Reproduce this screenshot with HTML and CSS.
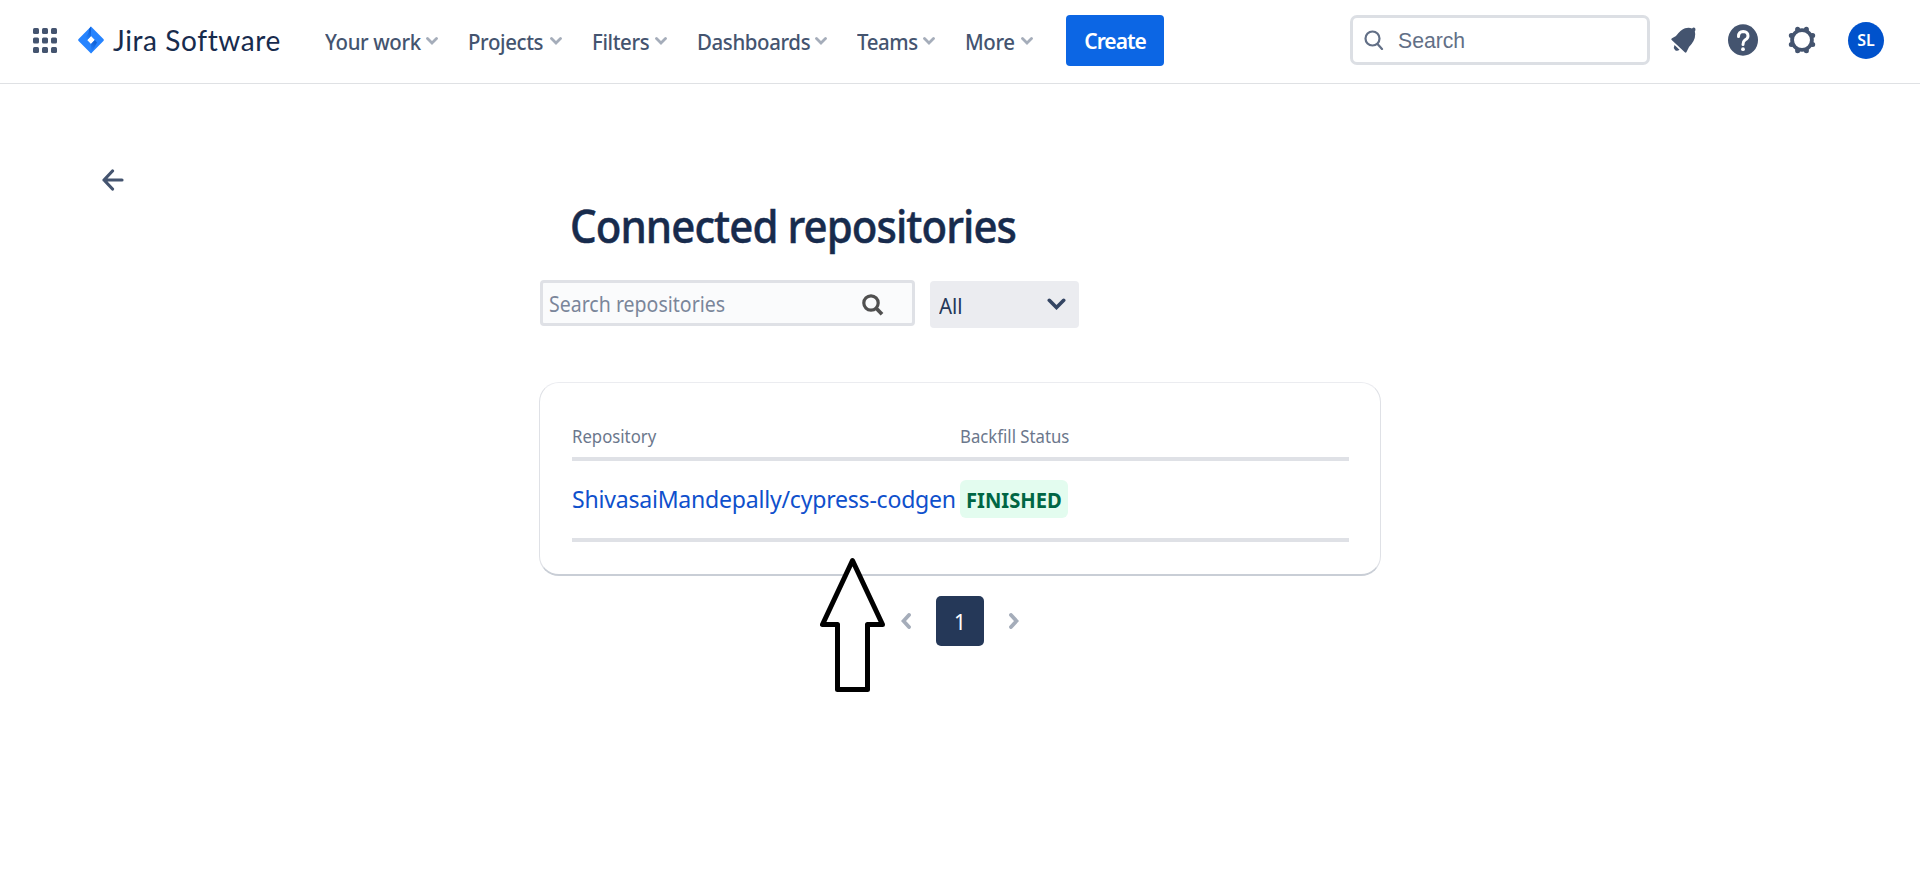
FILE: index.html
```html
<!DOCTYPE html>
<html lang="en">
<head>
<meta charset="utf-8">
<title>Connected repositories</title>
<link rel="stylesheet" href="styles.css">
</head>
<body>
<header class="topbar">
  <svg class="switcher" viewBox="0 0 24 25" fill="#44546f"><rect width="6" height="6" rx="1.5"/><rect x="9" width="6" height="6" rx="1.5"/><rect x="18" width="6" height="6" rx="1.5"/><rect y="9.5" width="6" height="6" rx="1.5"/><rect x="9" y="9.5" width="6" height="6" rx="1.5"/><rect x="18" y="9.5" width="6" height="6" rx="1.5"/><rect y="19" width="6" height="6" rx="1.5"/><rect x="9" y="19" width="6" height="6" rx="1.5"/><rect x="18" y="19" width="6" height="6" rx="1.5"/></svg>
  <svg class="logo" viewBox="0 0 26 28"><defs><linearGradient id="g1" x1="0.6" y1="0" x2="0.2" y2="0.9"><stop offset="0.2" stop-color="#1062d8"/><stop offset="1" stop-color="#2684ff"/></linearGradient></defs><path fill="#2684ff" fill-rule="evenodd" d="M13 .5 25.400 13q.9 1 0 2L13 27.500 .6 15q-.9-1 0-2ZM13 10 9.200 14 13 18 16.800 14Z"/><path fill="url(#g1)" d="M13 .5V10L9.200 14 7 11.500Q11.500 7 11 3Z"/><path fill="url(#g1)" d="M16.800 14 19 16.500 13 27.500V18Z"/></svg>
  <span class="brand">Jira Software</span>
  <nav class="nav">
    <a class="item w1"><span>Your work</span><svg class="chev" viewBox="0 0 12 8"><path d="M1.500 1.500 6 6 10.500 1.500"/></svg></a>
    <a class="item w2"><span>Projects</span><svg class="chev" viewBox="0 0 12 8"><path d="M1.500 1.500 6 6 10.500 1.500"/></svg></a>
    <a class="item w3"><span>Filters</span><svg class="chev" viewBox="0 0 12 8"><path d="M1.500 1.500 6 6 10.500 1.500"/></svg></a>
    <a class="item w4"><span>Dashboards</span><svg class="chev" viewBox="0 0 12 8"><path d="M1.500 1.500 6 6 10.500 1.500"/></svg></a>
    <a class="item w5"><span>Teams</span><svg class="chev" viewBox="0 0 12 8"><path d="M1.500 1.500 6 6 10.500 1.500"/></svg></a>
    <a class="item w6"><span>More</span><svg class="chev" viewBox="0 0 12 8"><path d="M1.500 1.500 6 6 10.500 1.500"/></svg></a>
  </nav>
  <button class="create">Create</button>
  <div class="search"><svg viewBox="0 0 20 20" fill="none" stroke="#626f86" stroke-width="2.200" stroke-linecap="round"><circle cx="8.500" cy="8.500" r="7"/><path d="m13.500 14 4.500 5"/></svg><span>Search</span></div>
  <svg class="bell" viewBox="0 0 25 26" fill="#44546f"><path d="M.7 13Q-.2 12 1 11.300L5 9Q10 2.500 14 1.300 18 .2 21 1.500 22.700-.2 24 1 25 2.500 23.800 4.500 25 9 22.500 14 20.500 17.500 18 20L15.500 25Q14.800 26.200 13.800 25.300Z"/><path d="M3.500 18 8.500 22.800Q6 24.800 4 23 2 20.500 3.500 18Z"/></svg>
  <svg class="help" viewBox="0 0 30 32"><ellipse cx="15" cy="16" rx="15" ry="15.700" fill="#44546f"/><path d="M10.500 12.500Q10.500 7.500 15.200 7.500 20 7.700 20 12 20 14.500 17 16 15 17.500 15 20.500" fill="none" stroke="#fff" stroke-width="3" stroke-linecap="round"/><circle cx="15" cy="25.200" r="1.900" fill="#fff"/></svg>
  <svg class="gear" viewBox="0 0 28 28"><circle cx="14" cy="14" r="9.900" fill="none" stroke="#44546f" stroke-width="3.800"/><path d="M9.600 3.300V3.400M18.400 3.300V3.400M9.600 24.700V24.600M18.400 24.700V24.600M3.300 9.600H3.400M3.300 18.400H3.400M24.700 9.600H24.600M24.700 18.400H24.600" stroke="#44546f" stroke-width="5" stroke-linecap="round"/></svg>
  <div class="avatar">SL</div>
</header>
<main class="page">
  <svg class="back" viewBox="0 0 22 22" fill="none" stroke="#44546f" stroke-width="3.200" stroke-linecap="round" stroke-linejoin="round"><path d="M20 11H2M10.500 2 2 11l8.500 9"/></svg>
  <section class="content">
    <h1 class="title"><span>Connected repositories</span></h1>
    <div class="filters">
      <div class="repo-search"><span>Search repositories</span><svg viewBox="0 0 22 22" fill="none" stroke="#505050"><circle cx="9" cy="9" r="7.200" stroke-width="3.200"/><path d="m14.500 14.500 5.500 5.800" stroke-width="3.800"/></svg></div>
      <div class="select"><span>All</span><svg viewBox="0 0 19 12" fill="none" stroke="#344563" stroke-width="3.600" stroke-linecap="round"><path d="M2.300 2.300 9.500 9.500l7.200-7.200"/></svg></div>
    </div>
    <div class="card">
      <div class="row head"><span>Repository</span><span>Backfill Status</span></div>
      <div class="row data"><a class="link">ShivasaiMandepally/cypress-codgen</a><span class="badge"><span>FINISHED</span></span></div>
    </div>
    <div class="pager">
      <svg viewBox="0 0 10 16"><path d="M8 2 2.500 8 8 14"/></svg>
      <span class="current">1</span>
      <svg viewBox="0 0 10 16"><path d="M2 2 7.500 8 2 14"/></svg>
    </div>
  </section>
</main>
<svg class="pointer" viewBox="0 0 66 136"><path d="M32.500 4.500 2.500 68.500H17.500V133.500H47.500V68.500H62.500Z" fill="#fff" stroke="#000" stroke-width="5" stroke-linejoin="round"/></svg>
</body>
</html>
```
FILE: styles.css
```css
* { box-sizing: border-box; }
body { margin: 0; height: 882px; overflow: hidden; background: #fff; color: #172b4d; font-family: "Noto Sans", "Open Sans", sans-serif; position: relative; }
svg { display: block; flex: none; }
span, a { white-space: nowrap; }
.topbar { height: 84px; border-bottom: 1px solid #dfe1e4; display: flex; align-items: center; padding: 0 36px 3px 33px; }
.switcher { width: 24px; height: 25px; }
.logo { width: 26px; height: 28px; margin-left: 21px; }
.brand { font: 400 28px/36px Lato, sans-serif; margin-left: 9px; width: 212px; letter-spacing: 0.6px; padding-bottom: 1px; }
.nav { display: flex; color: #44546f; font-size: 21.5px; font-weight: 500; line-height: 30px; padding-top: 3px; }
.item { display: flex; justify-content: space-between; align-items: center; letter-spacing: -0.4px; }
.item span { width: 0; transform: scaleX(0.95); transform-origin: left; }
.w1 { width: 113px; margin-right: 30px; }
.w2 { width: 94px; margin-right: 30px; }
.w3 { width: 75px; margin-right: 30px; }
.w4 { width: 130px; margin-right: 30px; }
.w5 { width: 78px; margin-right: 30px; }
.w6 { width: 68px; margin-right: 33px; }
.chev { width: 12px; height: 8px; margin-top: -1px; fill: none; stroke: #a5adba; stroke-width: 2.8; stroke-linecap: round; }
.create { width: 98px; height: 51px; padding: 2px 0 0; border: 0; border-radius: 4px; background: #0c66e4; color: #fff; font: 600 21px/30px "Noto Sans", sans-serif; letter-spacing: -1px; }
.search { width: 300px; height: 50px; margin-left: 186px; border: 3px solid #dcdfe4; border-radius: 7px; display: flex; align-items: center; padding: 0 11px; color: #626f86; font: 21.200px/30px "Liberation Sans", Arial, sans-serif; }
.search svg { width: 20px; height: 20px; margin-right: 14px; }
.search span { padding-top: 1px; }
.bell { width: 25px; height: 26px; margin-left: 21px; }
.help { width: 30px; height: 32px; margin-left: 32px; }
.gear { width: 28px; height: 28px; margin-left: 30px; }
.avatar { width: 36px; height: 37px; margin-left: 32px; border-radius: 50%; background: #0052cc; color: #fff; font-size: 16px; font-weight: 600; line-height: 37px; text-align: center; }
.page { display: flex; align-items: flex-start; padding: 85px 0 0 102px; }
.back { width: 22px; height: 22px; }
.content { width: 842px; margin-left: 415px; padding-top: 26px; }
.title { margin: 0; padding-left: 31px; height: 85px; font-size: 45px; line-height: 61px; font-weight: 500; letter-spacing: -1px; -webkit-text-stroke: 0.5px #172b4d; }
.title span { display: inline-block; transform: scaleX(0.933); transform-origin: left; }
.filters { display: flex; gap: 15px; padding-left: 1px; height: 102px; }
.repo-search { width: 375px; height: 46px; border: 3px solid #dfe1e6; border-radius: 4px; background: #fafbfc; color: #7a869a; display: flex; justify-content: space-between; align-items: center; padding: 0 28px 0 6px; font-size: 21px; }
.repo-search span { width: 0; padding-top: 2px; transform: scaleX(0.93); transform-origin: left; }
.repo-search svg { width: 22px; height: 22px; margin-top: 3px; }
.select { width: 149px; height: 47px; margin-top: 1px; border-radius: 4px; background: #ebecf0; display: flex; justify-content: space-between; align-items: center; padding: 0 13px 0 9px; font-size: 21.500px; color: #253858; }
.select span { padding-top: 2px; transform: scaleX(0.95); transform-origin: left; }
.select svg { width: 19px; height: 12px; margin-bottom: 1px; }
.card { height: 194px; border: 1px solid #dfe1e6; border-bottom: 2px solid #c9ced6; border-top-color: #ebecf0; border-radius: 20px; padding: 37px 31px 0 32px; }
.row { display: grid; grid-template-columns: 388px 1fr; align-items: center; border-bottom: 4px solid #dfe1e6; }
.head { height: 41px; font-size: 18px; color: #6b778c; padding-bottom: 6px; }
.head span { justify-self: start; transform: scaleX(0.93); transform-origin: left; }
.data { height: 81px; padding-bottom: 2px; }
.link { justify-self: start; width: 388px; color: #0f50cc; font-size: 24px; letter-spacing: -0.25px; transform: scaleX(0.962); transform-origin: left; margin-bottom: 1px; }
.badge { width: 108px; height: 38px; border-radius: 6px; background: #e3fcef; color: #006644; font-size: 21px; font-weight: 700; line-height: 40px; text-align: center; }
.badge span { display: inline-block; transform: scaleX(0.96); }
.pager { display: flex; align-items: center; justify-content: center; gap: 25px; margin-top: 20px; }
.pager svg { width: 10px; height: 16px; fill: none; stroke: #a5adba; stroke-width: 3.800; stroke-linecap: round; }
.current { width: 48px; height: 50px; border-radius: 5px; background: #253858; color: #fff; font-size: 21px; line-height: 53px; text-align: center; }
.pointer { position: absolute; left: 820px; top: 556px; width: 66px; height: 136px; }
```
